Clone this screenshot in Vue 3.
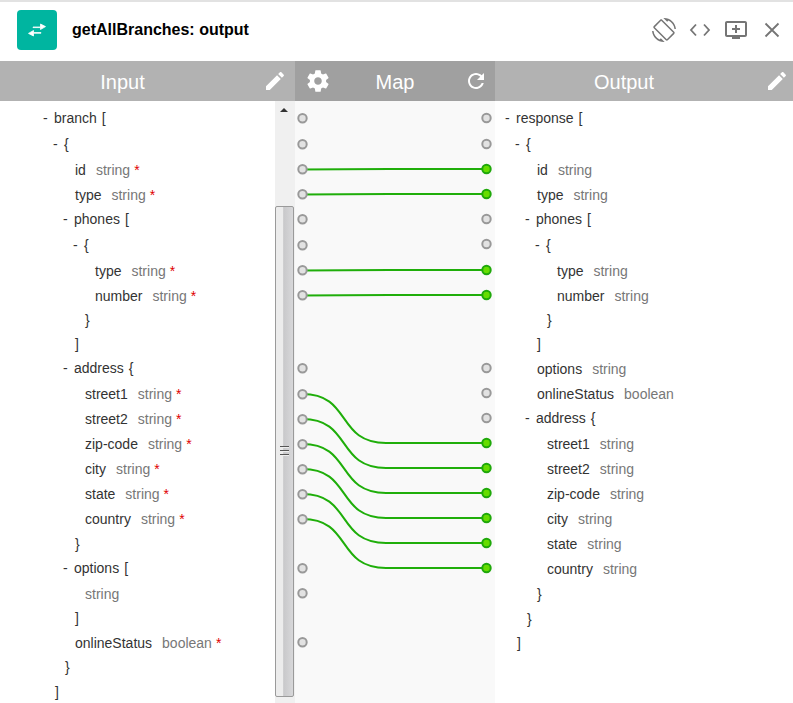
<template>
  <div class="app">
    <header class="topbar">
      <div class="logo">
        <svg width="18" height="14" viewBox="0 0 18 14">
          <path d="M5 4H12.5V1L17.5 3.6L12.5 6.5V4.6H5Z" class="logo-arrow" />
          <path d="M13 9.6H5.5V7.5L0.5 10.4L5.5 13V10.2H13Z" class="logo-arrow" />
        </svg>
      </div>
      <h1 class="title">getAllBranches: output</h1>
      <div class="actions">
        <svg class="wide" width="24" height="24" viewBox="0 0 24 24"><path :d="icons.rotate" /></svg>
        <svg width="22" height="16" viewBox="0 0 22 16" class="code"><path d="M7 2.5L2 8L7 13.5M15 2.5L20 8L15 13.5" /></svg>
        <svg class="wide" width="24" height="24" viewBox="0 0 24 24"><path :d="icons.queue" /></svg>
        <svg width="16" height="16" viewBox="0 0 16 16" class="close"><path d="M1.5 1.5L14.5 14.5M14.5 1.5L1.5 14.5" /></svg>
      </div>
    </header>

    <div class="columns">
      <section class="col col-input">
        <div class="col-head">
          <span class="head-label">Input</span>
          <svg class="head-icon right" width="24" height="24" viewBox="0 0 24 24"><path :d="icons.pencil" /></svg>
        </div>
        <div class="tree-wrap">
          <ul class="tree">
            <li v-for="(row, i) in inputRows" :key="i" class="row" :style="rowStyle(row, 0)">
              <span v-if="row.dash" class="dash">-</span>
              <span v-if="row.key" class="key">{{ row.key }}</span>
              <span v-if="row.type" class="type" :class="{ bare: !row.key }">{{ row.type }}</span>
              <span v-if="row.req" class="req">*</span>
              <span v-if="row.br" class="br" :class="{ lone: !row.key }">{{ row.br }}</span>
            </li>
          </ul>
          <div class="scrollbar">
            <span class="arrow"></span>
            <div class="thumb"><span class="grip"></span></div>
          </div>
        </div>
      </section>

      <section class="col col-map">
        <div class="col-head">
          <svg class="head-icon left" width="26" height="26" viewBox="0 0 24 24"><path :d="icons.gear" /></svg>
          <span class="head-label">Map</span>
          <svg class="head-icon right" width="24" height="24" viewBox="0 0 24 24"><path :d="icons.refresh" /></svg>
        </div>
        <div class="canvas">
          <svg width="200" height="602" viewBox="295 101 200 602">
            <path v-for="l in links" :key="l[0]" class="link" :d="linkPath(l)" />
            <circle v-for="y in leftPorts" :key="'l' + y" class="port" cx="302.5" :cy="y + 0.3" r="4.2" />
            <circle v-for="y in rightPorts" :key="'r' + y" class="port" :class="{ on: linked.has(y) }" cx="486.5" :cy="y" r="4.2" />
          </svg>
        </div>
      </section>

      <section class="col col-output">
        <div class="col-head">
          <span class="head-label">Output</span>
          <svg class="head-icon right" width="24" height="24" viewBox="0 0 24 24"><path :d="icons.pencil" /></svg>
        </div>
        <ul class="tree">
          <li v-for="(row, i) in outputRows" :key="i" class="row" :style="rowStyle(row, 33)">
            <span v-if="row.dash" class="dash">-</span>
            <span v-if="row.key" class="key">{{ row.key }}</span>
            <span v-if="row.type" class="type">{{ row.type }}</span>
            <span v-if="row.br" class="br" :class="{ lone: !row.key }">{{ row.br }}</span>
          </li>
        </ul>
      </section>
    </div>
  </div>
</template>

<script setup>
const icons = {
  rotate: 'M16.48 2.52c3.27 1.55 5.61 4.72 5.97 8.48h1.5C23.44 4.84 18.29 0 12 0l-.66.03 3.81 3.81 1.33-1.32zm-6.25-.77c-.59-.59-1.54-.59-2.12 0L1.75 8.11c-.59.59-.59 1.54 0 2.12l12.02 12.02c.59.59 1.54.59 2.12 0l6.36-6.36c.59-.59.59-1.54 0-2.12L10.23 1.75zm4.6 19.44L2.81 9.17l6.36-6.36 12.02 12.02-6.36 6.36zm-7.31.29C4.25 19.94 1.91 16.76 1.55 13H.05C.56 19.16 5.71 24 12 24l.66-.03-3.81-3.81-1.33 1.32z',
  queue: 'M21 3H3c-1.11 0-2 .89-2 2v12c0 1.1.89 2 2 2h5v2h8v-2h5c1.1 0 1.99-.9 1.99-2L23 5c0-1.11-.9-2-2-2zm0 14H3V5h18v12zm-5-7v2h-3v3h-2v-3H8v-2h3V7h2v3h3z',
  pencil: 'M3 17.25V21h3.75L17.81 9.94l-3.75-3.75L3 17.25zM20.71 7.04c.39-.39.39-1.02 0-1.41l-2.34-2.34c-.39-.39-1.02-.39-1.41 0l-1.83 1.83 3.75 3.75 1.83-1.83z',
  gear: 'M19.43 12.98c.04-.32.07-.64.07-.98s-.03-.66-.07-.98l2.11-1.65c.19-.15.24-.42.12-.64l-2-3.46c-.12-.22-.39-.3-.61-.22l-2.49 1c-.52-.4-1.08-.73-1.69-.98l-.38-2.65C14.46 2.18 14.25 2 14 2h-4c-.25 0-.46.18-.49.42l-.38 2.65c-.61.25-1.17.59-1.69.98l-2.49-1c-.23-.09-.49 0-.61.22l-2 3.46c-.13.22-.07.49.12.64l2.11 1.65c-.04.32-.07.65-.07.98s.03.66.07.98l-2.11 1.65c-.19.15-.24.42-.12.64l2 3.46c.12.22.39.3.61.22l2.49-1c.52.4 1.08.73 1.69.98l.38 2.65c.03.24.24.42.49.42h4c.25 0 .46-.18.49-.42l.38-2.65c.61-.25 1.17-.59 1.69-.98l2.49 1c.23.09.49 0 .61-.22l2-3.46c.12-.22.07-.49-.12-.64l-2.11-1.65zM12 15.5c-1.93 0-3.5-1.57-3.5-3.5s1.57-3.5 3.5-3.5 3.5 1.57 3.5 3.5-1.57 3.5-3.5 3.5z',
  refresh: 'M17.65 6.35C16.2 4.9 14.21 4 12 4c-4.42 0-7.99 3.58-7.99 8s3.57 8 7.99 8c3.73 0 6.84-2.55 7.73-6h-2.08c-.82 2.33-3.04 4-5.65 4-3.31 0-6-2.69-6-6s2.69-6 6-6c1.66 0 3.14.69 4.22 1.78L13 11h7V4l-2.35 2.35z'
}

// y is the text centre of the row, x the left edge of its label
const inputRows = [
  { y: 118, x: 54, dash: true, key: 'branch', br: '[' },
  { y: 144, x: 64, dash: true, br: '{' },
  { y: 170, x: 75, key: 'id', type: 'string', req: true },
  { y: 195, x: 75, key: 'type', type: 'string', req: true },
  { y: 219, x: 74, dash: true, key: 'phones', br: '[' },
  { y: 245, x: 84, dash: true, br: '{' },
  { y: 271, x: 95, key: 'type', type: 'string', req: true },
  { y: 296, x: 95, key: 'number', type: 'string', req: true },
  { y: 320, x: 85, br: '}' },
  { y: 344, x: 75, br: ']' },
  { y: 368, x: 74, dash: true, key: 'address', br: '{' },
  { y: 394, x: 85, key: 'street1', type: 'string', req: true },
  { y: 419, x: 85, key: 'street2', type: 'string', req: true },
  { y: 444, x: 85, key: 'zip-code', type: 'string', req: true },
  { y: 469, x: 85, key: 'city', type: 'string', req: true },
  { y: 494, x: 85, key: 'state', type: 'string', req: true },
  { y: 519, x: 85, key: 'country', type: 'string', req: true },
  { y: 544, x: 75, br: '}' },
  { y: 568, x: 74, dash: true, key: 'options', br: '[' },
  { y: 594, x: 85, type: 'string' },
  { y: 618, x: 75, br: ']' },
  { y: 643, x: 75, key: 'onlineStatus', type: 'boolean', req: true },
  { y: 667, x: 65, br: '}' },
  { y: 692, x: 55, br: ']' }
]

const outputRows = [
  { y: 118, x: 54, dash: true, key: 'response', br: '[' },
  { y: 144, x: 64, dash: true, br: '{' },
  { y: 170, x: 75, key: 'id', type: 'string' },
  { y: 195, x: 75, key: 'type', type: 'string' },
  { y: 219, x: 74, dash: true, key: 'phones', br: '[' },
  { y: 245, x: 84, dash: true, br: '{' },
  { y: 271, x: 95, key: 'type', type: 'string' },
  { y: 296, x: 95, key: 'number', type: 'string' },
  { y: 320, x: 85, br: '}' },
  { y: 344, x: 75, br: ']' },
  { y: 369, x: 75, key: 'options', type: 'string' },
  { y: 394, x: 75, key: 'onlineStatus', type: 'boolean' },
  { y: 418, x: 74, dash: true, key: 'address', br: '{' },
  { y: 444, x: 85, key: 'street1', type: 'string' },
  { y: 469, x: 85, key: 'street2', type: 'string' },
  { y: 494, x: 85, key: 'zip-code', type: 'string' },
  { y: 519, x: 85, key: 'city', type: 'string' },
  { y: 544, x: 85, key: 'state', type: 'string' },
  { y: 569, x: 85, key: 'country', type: 'string' },
  { y: 594, x: 75, br: '}' },
  { y: 619, x: 65, br: '}' },
  { y: 643, x: 55, br: ']' }
]

const leftPorts = [118, 144, 169, 194, 219, 245, 270, 295, 368, 394, 419, 444, 469, 494, 519, 568, 593, 642]
const rightPorts = [118, 144, 169, 194, 219, 244, 270, 295, 368, 393, 418, 443, 468, 493, 518, 543, 568]

const links = [
  [169, 169], [194, 194], [270, 270], [295, 295],
  [394, 443], [419, 468], [444, 493], [469, 518], [494, 543], [519, 568]
]
const linked = new Set(links.map(l => l[1]))

function linkPath([from, to]) {
  if (from === to) return `M302.5 ${from + 0.4} C340 ${from + 0.4} 350 ${to} 390 ${to} L486.5 ${to}`
  return `M302.5 ${from} C352 ${from} 336 ${to} 386 ${to} L486.5 ${to}`
}

function rowStyle(row, shift) {
  const rows = shift ? outputRows : inputRows
  const next = rows[rows.indexOf(row) + 1]
  return {
    height: (next ? next.y - row.y : 25) + 'px',
    paddingLeft: row.x - shift - (row.dash ? 11 : 0) + 'px'
  }
}
</script>

<style>
html, body {
  margin: 0;
  background: #fff;
}
</style>

<style scoped>
.app {
  width: 793px;
  height: 703px;
  overflow: hidden;
  display: flex;
  flex-direction: column;
  font-family: "Liberation Sans", Arial, sans-serif;
  background: #fff;
  border-top: 2px solid #e2e2e2;
  box-sizing: border-box;
}
.topbar {
  height: 59px;
  flex: none;
  display: flex;
  align-items: center;
  padding: 0 13px 3px 17px;
  box-sizing: border-box;
}
.logo {
  width: 40px;
  height: 40px;
  border-radius: 4px;
  background: #00b5a0;
  display: flex;
  align-items: center;
  justify-content: center;
}
.logo-arrow {
  fill: #fff;
  stroke: #fff;
  stroke-width: 0.8;
  stroke-linejoin: round;
}
.title {
  margin: 0 0 0 15px;
  font-size: 16px;
  font-weight: 700;
  color: #000;
}
.actions {
  margin-left: auto;
  display: flex;
  align-items: center;
  gap: 12px;
}
.actions svg {
  fill: #757575;
}
.actions .wide {
  margin: 0 1px;
}
.actions .code,
.actions .close {
  fill: none;
  stroke: #757575;
  stroke-width: 1.8;
}
.actions .close {
  margin-left: 3px;
}
.columns {
  flex: 1;
  display: flex;
  min-height: 0;
}
.col {
  display: flex;
  flex-direction: column;
}
.col-input {
  width: 295px;
}
.col-map {
  width: 200px;
}
.col-output {
  flex: 1;
}
.col-head {
  height: 40px;
  flex: none;
  position: relative;
  display: flex;
  align-items: center;
  justify-content: center;
  background: #b2b2b2;
  color: #fff;
  font-size: 20px;
}
.col-map .col-head {
  background: #a0a0a0;
}
.head-label {
  padding-top: 2px;
}
.col-input .head-label {
  margin-right: 50px;
}
.col-output .head-label {
  margin-right: 40px;
}
.head-icon {
  position: absolute;
  top: 8px;
  fill: #fff;
}
.head-icon.right {
  right: 4px;
}
.col-input .head-icon.right {
  right: 8px;
}
.head-icon.left {
  left: 10px;
  top: 7px;
}
.col-map .head-icon.right {
  right: 7px;
}
.tree-wrap {
  flex: 1;
  display: flex;
  min-height: 0;
}
.tree {
  flex: 1;
  margin: 0;
  padding: 5px 0 0;
  list-style: none;
  font-size: 14px;
  color: #333;
}
.row {
  display: flex;
  line-height: 25px;
  white-space: nowrap;
  box-sizing: border-box;
}
.dash {
  width: 11px;
  flex: none;
}
.type {
  margin-left: 10px;
  color: #777;
}
.type.bare {
  margin-left: 0;
}
.req {
  margin-left: 4px;
  color: #e00000;
}
.br {
  margin-left: 5px;
}
.br.lone {
  margin-left: 0;
}
.scrollbar {
  width: 20px;
  flex: none;
  position: relative;
  background: #f0f0f0;
  box-sizing: border-box;
}
.arrow {
  position: absolute;
  left: 5px;
  top: 7px;
  border-left: 4px solid transparent;
  border-right: 4px solid transparent;
  border-bottom: 4px solid #333;
}
.thumb {
  position: absolute;
  left: 0;
  right: 1px;
  top: 105px;
  height: 491px;
  box-sizing: border-box;
  border: 1px solid #9a9a9a;
  border-radius: 2px;
  background: linear-gradient(90deg, #ececec 0 40%, #c8c8ca 45%, #d8d8da 100%);
}
.grip {
  position: absolute;
  left: 4px;
  top: 239px;
  width: 9px;
  height: 10px;
  background: linear-gradient(#555 0 1px, #eee 1px 2px, transparent 2px 4px, #555 4px 5px, #eee 5px 6px, transparent 6px 8px, #555 8px 9px, #eee 9px 10px);
}
.canvas {
  flex: 1;
  background: #f9f9f9;
  min-height: 0;
}
.canvas svg {
  display: block;
}
.link {
  fill: none;
  stroke: #1fae0a;
  stroke-width: 2;
}
.port {
  fill: #e2e2e2;
  stroke: #999;
  stroke-width: 2;
}
.port.on {
  fill: #66dd00;
  stroke: #1fa80a;
}
</style>
